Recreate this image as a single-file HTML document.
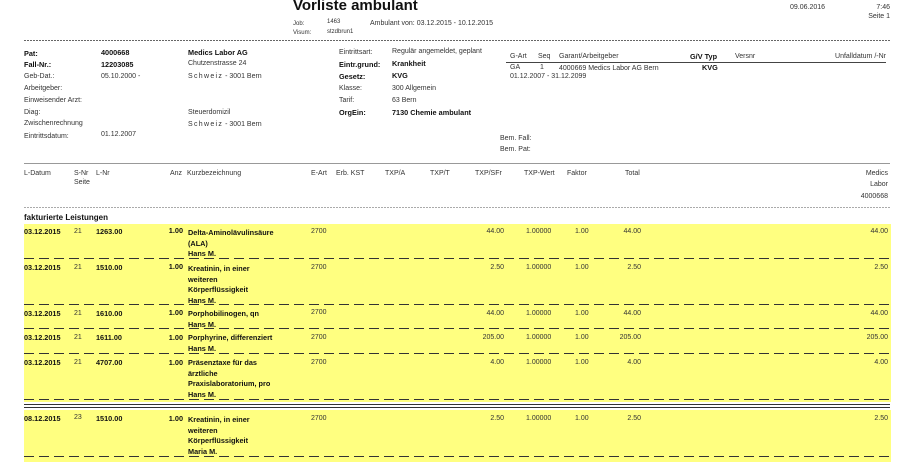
<!DOCTYPE html>
<html><head><meta charset="utf-8"><style>
body{margin:0;width:900px;height:462px;background:#fff;position:relative;overflow:hidden;font-family:"Liberation Sans",Arial,sans-serif;font-size:7px;color:#333}
div{position:absolute;white-space:nowrap;line-height:10px}
.b{font-weight:bold;color:#111;font-size:7.3px}
.r{text-align:right}
.y{background:#ffff80;left:24px;width:867px;position:absolute}
.dash{left:24px;width:866px;height:1.4px;background:repeating-linear-gradient(90deg,#333 0 10px,transparent 10px 15px)}
.dot{left:24px;width:866px;height:1px;background:repeating-linear-gradient(90deg,#666 0 2px,transparent 2px 3px)}
</style></head><body>
<div class="b" style="left:293px;top:-2px;font-size:15px;line-height:16px">Vorliste ambulant</div>
<div style="left:790px;top:3px">09.06.2016</div>
<div class="r" style="left:850px;width:40px;top:3px">7:46</div>
<div class="r" style="left:850px;width:40px;top:12px">Seite 1</div>
<div style="left:293px;top:19px;font-size:6px">Job:</div>
<div style="left:327px;top:17px;font-size:6px">1463</div>
<div style="left:370px;top:19px">Ambulant von: 03.12.2015 - 10.12.2015</div>
<div style="left:293px;top:28px;font-size:6px">Visum:</div>
<div style="left:327px;top:27px;font-size:6px">stzdbrun1</div>
<div class="dot" style="top:40px"></div>

<div class="b" style="left:24px;top:49px">Pat:</div><div class="b" style="left:101px;top:48px">4000668</div>
<div class="b" style="left:188px;top:48px">Medics Labor AG</div>
<div class="b" style="left:24px;top:60px">Fall-Nr.:</div><div class="b" style="left:101px;top:60px">12203085</div>
<div style="left:188px;top:59px">Chutzenstrasse 24</div>
<div style="left:24px;top:72px">Geb-Dat.:</div><div style="left:101px;top:72px">05.10.2000 -</div>
<div style="left:188px;top:72px;letter-spacing:1.3px">Schweiz<span style="letter-spacing:0"> - 3001 Bern</span></div>
<div style="left:24px;top:84px">Arbeitgeber:</div>
<div style="left:24px;top:96px">Einweisender Arzt:</div>
<div style="left:24px;top:108px">Diag:</div>
<div style="left:188px;top:108px">Steuerdomizil</div>
<div style="left:24px;top:119px">Zwischenrechnung</div>
<div style="left:188px;top:120px;letter-spacing:1.3px">Schweiz<span style="letter-spacing:0"> - 3001 Bern</span></div>
<div style="left:24px;top:132px">Eintrittsdatum:</div><div style="left:101px;top:130px">01.12.2007</div>

<div style="left:339px;top:48px">Eintrittsart:</div><div style="left:392px;top:47px">Regulär angemeldet, geplant</div>
<div class="b" style="left:339px;top:60px">Eintr.grund:</div><div class="b" style="left:392px;top:59px">Krankheit</div>
<div class="b" style="left:339px;top:72px">Gesetz:</div><div class="b" style="left:392px;top:71px">KVG</div>
<div style="left:339px;top:84px">Klasse:</div><div style="left:392px;top:84px">300 Allgemein</div>
<div style="left:339px;top:96px">Tarif:</div><div style="left:392px;top:96px">63 Bern</div>
<div class="b" style="left:339px;top:108px">OrgEin:</div><div class="b" style="left:392px;top:108px">7130 Chemie ambulant</div>

<div style="left:510px;top:52px">G-Art</div><div style="left:538px;top:52px">Seq</div>
<div style="left:559px;top:52px">Garant/Arbeitgeber</div>
<div class="b" style="left:690px;top:52px">G/V Typ</div><div style="left:735px;top:52px">Versnr</div>
<div class="r" style="left:780px;width:106px;top:52px">Unfalldatum /-Nr</div>
<div style="left:506px;top:62px;width:380px;height:1px;background:#444"></div>
<div style="left:510px;top:63px">GA</div><div style="left:540px;top:63px">1</div>
<div style="left:559px;top:64px">4000669 Medics Labor AG Bern</div>
<div class="b" style="left:702px;top:63px">KVG</div>
<div style="left:510px;top:72px">01.12.2007 - 31.12.2099</div>
<div style="left:500px;top:134px">Bem. Fall:</div>
<div style="left:500px;top:145px">Bem. Pat:</div>

<div style="left:24px;top:163px;width:866px;height:1px;background:#999"></div>
<div style="left:24px;top:169px">L-Datum</div>
<div style="left:74px;top:169px">S-Nr</div><div style="left:96px;top:169px">L-Nr</div>
<div style="left:74px;top:178px">Seite</div>
<div style="left:170px;top:169px">Anz</div><div style="left:187px;top:169px">Kurzbezeichnung</div>
<div style="left:311px;top:169px">E-Art</div><div style="left:336px;top:169px">Erb. KST</div>
<div style="left:385px;top:169px">TXP/A</div><div style="left:430px;top:169px">TXP/T</div>
<div style="left:475px;top:169px">TXP/SFr</div><div style="left:524px;top:169px">TXP-Wert</div>
<div style="left:567px;top:169px">Faktor</div><div style="left:625px;top:169px">Total</div>
<div class="r" style="left:830px;width:58px;top:169px">Medics</div>
<div class="r" style="left:830px;width:58px;top:180px">Labor</div>
<div class="r" style="left:830px;width:58px;top:192px">4000668</div>
<div class="dot" style="top:207px;background:repeating-linear-gradient(90deg,#aaa 0 2px,transparent 2px 3px)"></div>
<div class="b" style="left:24px;top:213px;font-size:8px">fakturierte Leistungen</div>

<div class="y" style="top:224px;height:178px"></div>
<div class="y" style="top:410px;height:52px"></div>
<div style="left:24px;top:404px;width:866px;height:1px;background:#333"></div>
<div style="left:24px;top:407px;width:866px;height:1px;background:#333"></div>

<div class="b" style="left:24px;top:227px">03.12.2015</div><div style="left:74px;top:227px">21</div><div class="b" style="left:96px;top:227px">1263.00</div>
<div class="b r" style="left:160px;width:23px;top:226px">1.00</div>
<div class="b" style="left:188px;top:228px;line-height:10.6px">Delta-Aminolävulinsäure<br>(ALA)<br>Hans M.</div>
<div style="left:311px;top:227px">2700</div>
<div class="r" style="left:460px;width:44px;top:227px">44.00</div><div style="left:526px;top:227px">1.00000</div><div style="left:575px;top:227px">1.00</div>
<div class="r" style="left:600px;width:41px;top:227px">44.00</div><div class="r" style="left:830px;width:58px;top:227px">44.00</div>
<div class="dash" style="top:258px"></div>

<div class="b" style="left:24px;top:263px">03.12.2015</div><div style="left:74px;top:263px">21</div><div class="b" style="left:96px;top:263px">1510.00</div>
<div class="b r" style="left:160px;width:23px;top:262px">1.00</div>
<div class="b" style="left:188px;top:264px;line-height:10.6px">Kreatinin, in einer<br>weiteren<br>Körperflüssigkeit<br>Hans M.</div>
<div style="left:311px;top:263px">2700</div>
<div class="r" style="left:460px;width:44px;top:263px">2.50</div><div style="left:526px;top:263px">1.00000</div><div style="left:575px;top:263px">1.00</div>
<div class="r" style="left:600px;width:41px;top:263px">2.50</div><div class="r" style="left:830px;width:58px;top:263px">2.50</div>
<div class="dash" style="top:304px"></div>

<div class="b" style="left:24px;top:309px">03.12.2015</div><div style="left:74px;top:309px">21</div><div class="b" style="left:96px;top:309px">1610.00</div>
<div class="b r" style="left:160px;width:23px;top:308px">1.00</div>
<div class="b" style="left:188px;top:309px;line-height:10.6px">Porphobilinogen, qn<br>Hans M.</div>
<div style="left:311px;top:308px">2700</div>
<div class="r" style="left:460px;width:44px;top:309px">44.00</div><div style="left:526px;top:309px">1.00000</div><div style="left:575px;top:309px">1.00</div>
<div class="r" style="left:600px;width:41px;top:309px">44.00</div><div class="r" style="left:830px;width:58px;top:309px">44.00</div>
<div class="dash" style="top:328px"></div>

<div class="b" style="left:24px;top:333px">03.12.2015</div><div style="left:74px;top:333px">21</div><div class="b" style="left:96px;top:333px">1611.00</div>
<div class="b r" style="left:160px;width:23px;top:333px">1.00</div>
<div class="b" style="left:188px;top:333px;line-height:10.6px">Porphyrine, differenziert<br>Hans M.</div>
<div style="left:311px;top:333px">2700</div>
<div class="r" style="left:460px;width:44px;top:333px">205.00</div><div style="left:526px;top:333px">1.00000</div><div style="left:575px;top:333px">1.00</div>
<div class="r" style="left:600px;width:41px;top:333px">205.00</div><div class="r" style="left:830px;width:58px;top:333px">205.00</div>
<div class="dash" style="top:353px"></div>

<div class="b" style="left:24px;top:358px">03.12.2015</div><div style="left:74px;top:358px">21</div><div class="b" style="left:96px;top:358px">4707.00</div>
<div class="b r" style="left:160px;width:23px;top:358px">1.00</div>
<div class="b" style="left:188px;top:358px;line-height:10.6px">Präsenztaxe für das<br>ärztliche<br>Praxislaboratorium, pro<br>Hans M.</div>
<div style="left:311px;top:358px">2700</div>
<div class="r" style="left:460px;width:44px;top:358px">4.00</div><div style="left:526px;top:358px">1.00000</div><div style="left:575px;top:358px">1.00</div>
<div class="r" style="left:600px;width:41px;top:358px">4.00</div><div class="r" style="left:830px;width:58px;top:358px">4.00</div>
<div class="dash" style="top:399px"></div>

<div class="b" style="left:24px;top:414px">08.12.2015</div><div style="left:74px;top:413px">23</div><div class="b" style="left:96px;top:414px">1510.00</div>
<div class="b r" style="left:160px;width:23px;top:414px">1.00</div>
<div class="b" style="left:188px;top:415px;line-height:10.6px">Kreatinin, in einer<br>weiteren<br>Körperflüssigkeit<br>Maria M.</div>
<div style="left:311px;top:414px">2700</div>
<div class="r" style="left:460px;width:44px;top:414px">2.50</div><div style="left:526px;top:414px">1.00000</div><div style="left:575px;top:414px">1.00</div>
<div class="r" style="left:600px;width:41px;top:414px">2.50</div><div class="r" style="left:830px;width:58px;top:414px">2.50</div>
<div class="dash" style="top:456px"></div>
</body></html>
